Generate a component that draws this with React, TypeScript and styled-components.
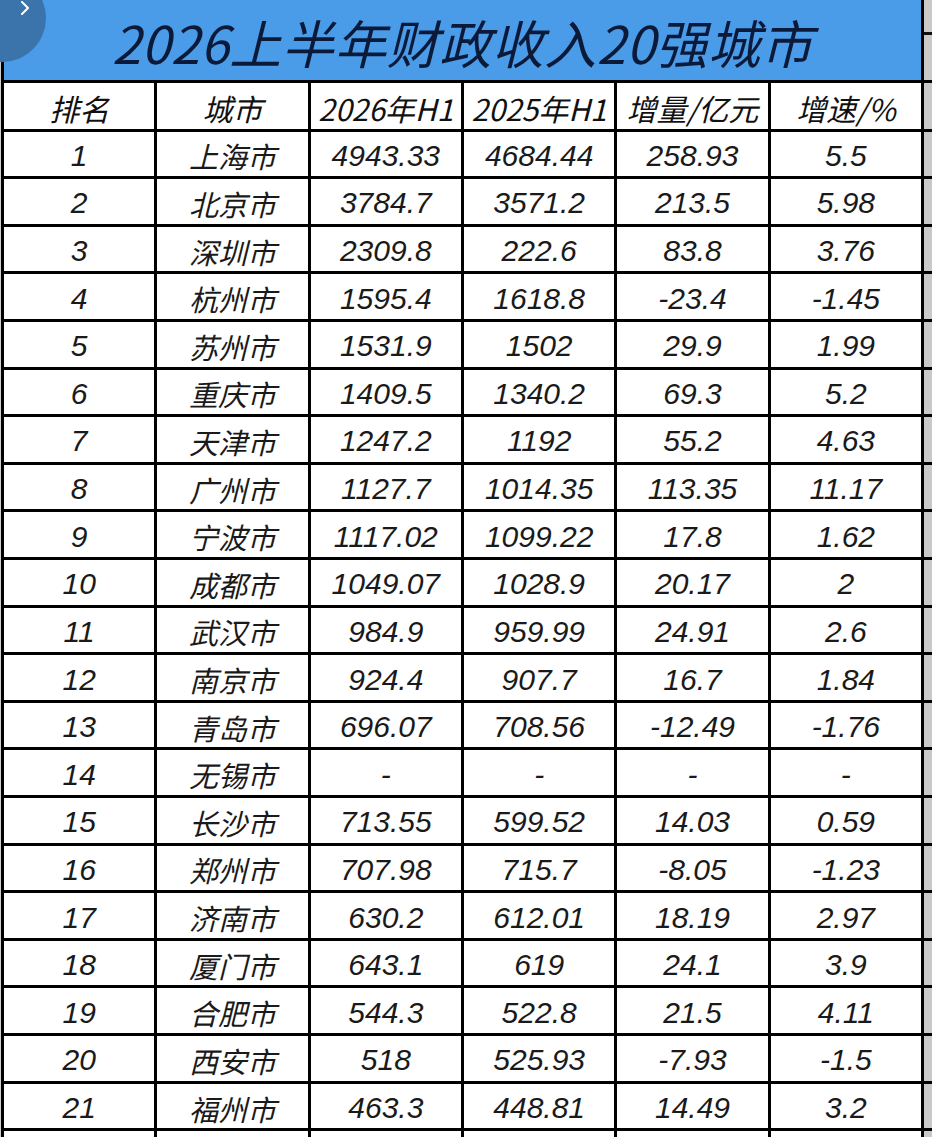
import React from "react";
import styled, { createGlobalStyle } from "styled-components";

const Global = createGlobalStyle`
  html, body {
    margin: 0;
    padding: 0;
    width: 932px;
    height: 1137px;
    overflow: hidden;
    background: #d0d0d0;
  }
`;

const Page = styled.div`
  position: relative;
  width: 932px;
  height: 1137px;
  overflow: hidden;
  padding-left: 1px;
  box-sizing: border-box;
`;

const Sheet = styled.div`
  display: grid;
  grid-template-columns: repeat(6, 1fr) 8px;
  grid-template-rows: 79.5px 46px repeat(21, 44.62px) 30px;
  gap: 3px;
  padding-left: 3px;
  background: #000;
  width: 931px;
  box-sizing: border-box;
`;

const TitleCell = styled.div`
  grid-column: 1 / 7;
  background: #4a9be8;
  display: flex;
  align-items: center;
  justify-content: center;
  padding-top: 4px;
  font-family: "Noto Sans CJK SC", "Noto Sans", sans-serif;
  font-style: italic;
  font-size: 52px;
  font-weight: 400;
  color: #0c1a3a;
  letter-spacing: 0.5px;
`;

const StripCell = styled.div<{ $tick?: boolean }>`
  background: ${(p) =>
    p.$tick
      ? "linear-gradient(to bottom, #c9c9c9 0, #c9c9c9 32px, #111 32px, #111 35px, #c9c9c9 35px)"
      : "#c9c9c9"};
`;

const HeaderCell = styled.div`
  background: #fff;
  display: flex;
  align-items: center;
  justify-content: center;
  padding-top: 5px;
  font-family: "Noto Sans CJK SC", "Noto Sans", sans-serif;
  font-style: italic;
  font-size: 30px;
  color: #111;
  white-space: nowrap;
  overflow: hidden;
`;

const DataCell = styled.div<{ $kind: "rank" | "city" | "num" }>`
  background: #fff;
  display: flex;
  align-items: center;
  justify-content: center;
  padding-top: ${(p) => (p.$kind === "city" ? "3px" : "4px")};
  font-family: ${(p) =>
    p.$kind === "city"
      ? `"Noto Sans CJK SC", "Noto Sans", sans-serif`
      : `"Liberation Sans", "Noto Sans CJK SC", sans-serif`};
  font-style: italic;
  font-size: ${(p) => (p.$kind === "city" ? "29px" : "30px")};
  color: #1a1a1a;
  white-space: nowrap;
`;

const NavBubble = styled.div`
  position: absolute;
  left: -42px;
  top: -26px;
  width: 88px;
  height: 88px;
  border-radius: 50%;
  background: #3b73ab;
  display: flex;
  align-items: flex-start;
  justify-content: flex-end;
  box-sizing: border-box;
  padding: 27px 16px 0 0;
`;

const headers = ["排名", "城市", "2026年H1", "2025年H1", "增量/亿元", "增速/%"];

const rows: [string, string, string, string, string][] = [
  ["上海市", "4943.33", "4684.44", "258.93", "5.5"],
  ["北京市", "3784.7", "3571.2", "213.5", "5.98"],
  ["深圳市", "2309.8", "222.6", "83.8", "3.76"],
  ["杭州市", "1595.4", "1618.8", "-23.4", "-1.45"],
  ["苏州市", "1531.9", "1502", "29.9", "1.99"],
  ["重庆市", "1409.5", "1340.2", "69.3", "5.2"],
  ["天津市", "1247.2", "1192", "55.2", "4.63"],
  ["广州市", "1127.7", "1014.35", "113.35", "11.17"],
  ["宁波市", "1117.02", "1099.22", "17.8", "1.62"],
  ["成都市", "1049.07", "1028.9", "20.17", "2"],
  ["武汉市", "984.9", "959.99", "24.91", "2.6"],
  ["南京市", "924.4", "907.7", "16.7", "1.84"],
  ["青岛市", "696.07", "708.56", "-12.49", "-1.76"],
  ["无锡市", "-", "-", "-", "-"],
  ["长沙市", "713.55", "599.52", "14.03", "0.59"],
  ["郑州市", "707.98", "715.7", "-8.05", "-1.23"],
  ["济南市", "630.2", "612.01", "18.19", "2.97"],
  ["厦门市", "643.1", "619", "24.1", "3.9"],
  ["合肥市", "544.3", "522.8", "21.5", "4.11"],
  ["西安市", "518", "525.93", "-7.93", "-1.5"],
  ["福州市", "463.3", "448.81", "14.49", "3.2"],
];

export default function App() {
  return (
    <>
      <Global />
      <Page>
        <Sheet>
          <TitleCell>2026上半年财政收入20强城市</TitleCell>
          <StripCell $tick />
          {headers.map((h) => (
            <HeaderCell key={h}>{h}</HeaderCell>
          ))}
          <StripCell />
          {rows.map((r, i) => (
            <React.Fragment key={r[0]}>
              <DataCell $kind="rank">{i + 1}</DataCell>
              <DataCell $kind="city">{r[0]}</DataCell>
              <DataCell $kind="num">{r[1]}</DataCell>
              <DataCell $kind="num">{r[2]}</DataCell>
              <DataCell $kind="num">{r[3]}</DataCell>
              <DataCell $kind="num">{r[4]}</DataCell>
              <StripCell />
            </React.Fragment>
          ))}
          {Array.from({ length: 6 }).map((_, i) => (
            <DataCell key={"e" + i} $kind="num" />
          ))}
          <StripCell />
        </Sheet>
        <NavBubble>
          <svg width="10" height="14" viewBox="0 0 10 14" aria-hidden="true">
            <polyline
              points="2,1 8,7 2,13"
              fill="none"
              stroke="#ffffff"
              strokeWidth="2"
              strokeLinecap="round"
              strokeLinejoin="round"
            />
          </svg>
        </NavBubble>
      </Page>
    </>
  );
}
